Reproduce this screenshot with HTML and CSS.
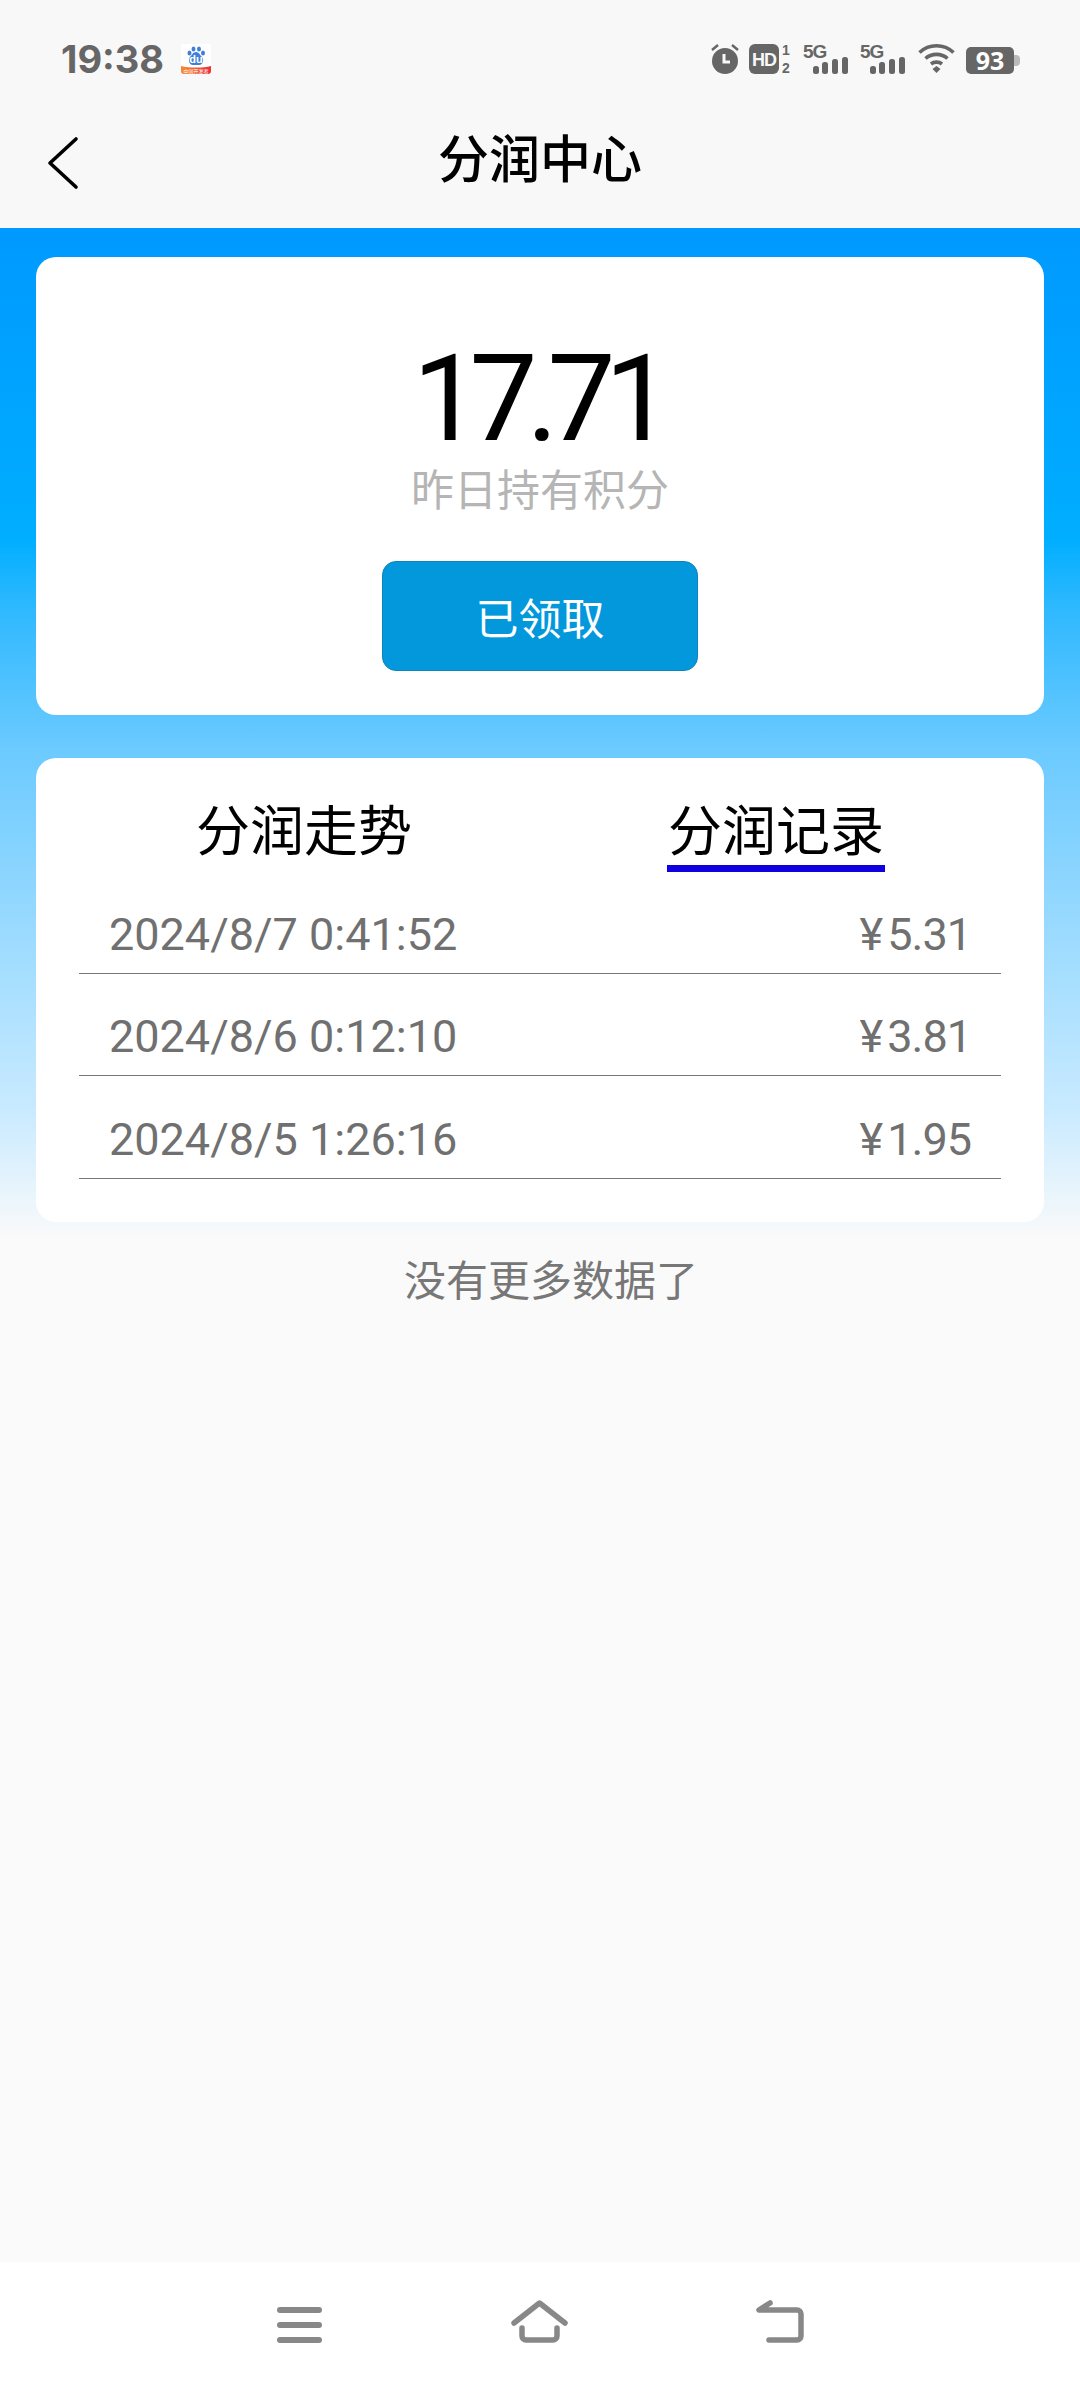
FILE: index.html
```html
<!DOCTYPE html>
<html lang="zh-CN">
<head>
  <meta charset="UTF-8">
  <meta name="viewport" content="width=device-width, initial-scale=1.0">
  <title>分润中心</title>
  <link rel="stylesheet" href="styles.css">
</head>
<body>
  <div class="top">
    <div class="status">
      <div class="status-left">
        <span class="clock">19:38</span>
        <svg class="baidu" width="30" height="30" viewBox="0 0 30 30">
          <defs>
            <linearGradient id="baiduBand" x1="0" x2="1" y1="0" y2="0">
              <stop offset="0" stop-color="#f58a2a"/>
              <stop offset="1" stop-color="#ee2f3c"/>
            </linearGradient>
          </defs>
          <rect width="30" height="30" rx="3" fill="#fff"/>
          <path d="M0 22c8 2 22 2 30 0v5a3 3 0 0 1-3 3H3a3 3 0 0 1-3-3z" fill="url(#baiduBand)"/>
          <g fill="#3f7fd8">
            <ellipse cx="8.500" cy="9" rx="2" ry="2.600"/>
            <ellipse cx="12.500" cy="5" rx="2" ry="2.600"/>
            <ellipse cx="18" cy="5" rx="2" ry="2.600"/>
            <ellipse cx="22" cy="9" rx="2" ry="2.600"/>
            <path d="M15 8c3 0 4 3 6 5 2 3 1 8-3 8h-6c-4 0-5-5-3-8 2-2 3-5 6-5z"/>
          </g>
          <text x="15" y="19" class="baidu-du">du</text>
          <text x="15" y="28.500" class="baidu-band">中国开发者</text>
        </svg>
      </div>
      <div class="status-right">
        <svg class="alarm" width="30" height="30" viewBox="0 0 30 30">
          <circle cx="15" cy="17" r="13" fill="#666"/>
          <path d="M2 6l6-5M28 6l-6-5" stroke="#666" stroke-width="2.500" fill="none"/>
          <path d="M14 10v8h6" stroke="#f8f8f8" stroke-width="3" fill="none"/>
        </svg>
        <svg class="hd" width="43" height="30" viewBox="0 0 43 30">
          <rect width="30" height="30" rx="6" fill="#666"/>
          <text x="15" y="21.500" class="hd-text">HD</text>
          <text x="37" y="11" class="sim-no">1</text>
          <text x="37" y="29" class="sim-no">2</text>
        </svg>
        <svg class="signal" width="45" height="30" viewBox="0 0 45 30">
          <text x="0" y="14" class="net">5G</text>
          <rect x="10" y="22" width="6" height="8" rx="2.500" fill="#666"/>
          <rect x="19" y="18" width="6" height="12" rx="2.500" fill="#666"/>
          <rect x="29" y="15" width="6" height="15" rx="2.500" fill="#666"/>
          <rect x="39" y="13" width="6" height="17" rx="2.500" fill="#666"/>
        </svg>
        <svg class="signal" width="45" height="30" viewBox="0 0 45 30">
          <text x="0" y="14" class="net">5G</text>
          <rect x="10" y="22" width="6" height="8" rx="2.500" fill="#666"/>
          <rect x="19" y="18" width="6" height="12" rx="2.500" fill="#666"/>
          <rect x="29" y="15" width="6" height="15" rx="2.500" fill="#666"/>
          <rect x="39" y="13" width="6" height="17" rx="2.500" fill="#666"/>
        </svg>
        <svg class="wifi" width="37" height="30" viewBox="0 0 37 30">
          <path d="M1.500 8.500C11 -0.500 26 -0.500 35.500 8.500M7.500 14.500C13.500 9 23.500 9 29.500 14.500M13 20C16 17.500 21 17.500 24 20" stroke="#666" stroke-width="3.600" fill="none"/>
          <path d="M14.500 25l4-3 4 3-4 4z" fill="#666"/>
        </svg>
        <svg class="battery" width="54" height="27" viewBox="0 0 54 27">
          <rect width="48" height="27" rx="5" fill="#666"/>
          <path d="M48 8h2a4 4 0 0 1 4 4v3a4 4 0 0 1-4 4h-2z" fill="#bbb"/>
          <text x="24" y="23" class="batt-text">93</text>
        </svg>
      </div>
    </div>
    <div class="titlebar">
      <svg class="back" width="36" height="56" viewBox="0 0 36 56">
        <path d="M29 4L3 28l26 24" stroke="#000" stroke-width="3.600" stroke-linecap="round" stroke-linejoin="round" fill="none"/>
      </svg>
      <h1 class="title">分润中心</h1>
    </div>
  </div>

  <main class="main">
    <section class="card points">
      <div class="amount">17.71</div>
      <div class="amount-label">昨日持有积分</div>
      <button class="claim">已领取</button>
    </section>

    <section class="card records">
      <div class="tabs">
        <span class="tab">分润走势</span>
        <span class="tab active">分润记录</span>
      </div>
      <div class="row"><span>2024/8/7 0:41:52</span><span class="money">¥ 5.31</span></div>
      <div class="row"><span>2024/8/6 0:12:10</span><span class="money">¥ 3.81</span></div>
      <div class="row"><span>2024/8/5 1:26:16</span><span class="money">¥ 1.95</span></div>
    </section>

    <p class="no-more">没有更多数据了</p>
  </main>

  <nav class="navbar">
    <svg class="nav-menu" width="45" height="36" viewBox="0 0 45 36">
      <path d="M3 3h39M3 18h39M3 33h39" stroke="#888" stroke-width="6" stroke-linecap="round"/>
    </svg>
    <svg width="57" height="43" viewBox="0 0 57 43">
      <path d="M3 23L28.500 3 54 23" stroke="#888" stroke-width="5.500" stroke-linecap="round" stroke-linejoin="round" fill="none"/>
      <path d="M11 28v8a4 4 0 0 0 4 4h27a4 4 0 0 0 4-4v-8" stroke="#888" stroke-width="5.500" stroke-linecap="round" fill="none"/>
    </svg>
    <svg width="48" height="43" viewBox="0 0 48 43">
      <path d="M14 3L3 10h38a4 4 0 0 1 4 4v22a4 4 0 0 1-4 4H13" stroke="#888" stroke-width="5.500" stroke-linecap="round" stroke-linejoin="round" fill="none"/>
    </svg>
  </nav>
</body>
</html>
```

FILE: styles.css
```css
* {
  box-sizing: border-box;
}
html, body {
  margin: 0;
  height: 100%;
}
body {
  width: 1080px;
  height: 2388px;
  display: flex;
  flex-direction: column;
  overflow: hidden;
  font-family: Roboto, "Noto Sans CJK SC", sans-serif;
  background: #fafafa;
  color: #000;
}
svg {
  overflow: visible;
}

/* status bar + title */
.top {
  height: 228px;
  background: #f8f8f8;
}
.status {
  height: 114px;
  padding: 44px 60px 0 61px;
  display: flex;
  justify-content: space-between;
  align-items: flex-start;
}
.status-left {
  display: flex;
  align-items: center;
  gap: 17px;
}
.clock {
  font-family: Inter, "Noto Sans", sans-serif;
  font-size: 38px;
  line-height: 28px;
  font-weight: 700;
  color: #666;
}
.baidu-du {
  font: 700 11px "Liberation Sans", sans-serif;
  fill: #fff;
  text-anchor: middle;
}
.baidu-band {
  font: 5px "Noto Sans CJK SC", sans-serif;
  fill: #fff;
  text-anchor: middle;
}
.status-right {
  display: flex;
  align-items: flex-start;
  gap: 9px;
}
.status-right .hd {
  margin-right: 2px;
}
.status-right .signal {
  margin-right: 3px;
}
.status-right .wifi {
  margin: 0 2px 0 1px;
}
.status-right .battery {
  margin-top: 3px;
}
.hd-text {
  font: 700 18px "Liberation Sans", sans-serif;
  letter-spacing: -1px;
  fill: #f8f8f8;
  text-anchor: middle;
}
.sim-no {
  font: 700 14px "Liberation Sans", sans-serif;
  fill: #666;
  text-anchor: middle;
}
.net {
  font: 700 19px "Liberation Sans", sans-serif;
  letter-spacing: -1px;
  fill: #666;
}
.batt-text {
  font: 700 25px "Noto Sans", sans-serif;
  fill: #fff;
  text-anchor: middle;
}
.titlebar {
  height: 114px;
  padding-left: 47px;
  display: flex;
  align-items: flex-start;
  position: relative;
}
.back {
  margin-top: 21px;
}
.title {
  position: absolute;
  left: 0;
  right: 0;
  top: 16px;
  margin: 0;
  text-align: center;
  font-size: 51px;
  line-height: 62px;
  font-weight: 500;
}

.main {
  flex: 1;
  padding: 29px 36px 0;
  background: linear-gradient(180deg, #0099ff 0, #00aeff 310px, #2cb8ff 375px, #6bcaff 520px, #c8eaff 880px, #fafafa 1010px);
}
.card {
  background: #fff;
  border-radius: 20px;
}
.points {
  height: 458px;
  padding-top: 74px;
  margin-bottom: 43px;
  display: flex;
  flex-direction: column;
  align-items: center;
}
.amount {
  font-size: 121px;
  line-height: 136px;
  letter-spacing: -11px;
  padding-right: 6px;
}
.amount-label {
  font-size: 43px;
  line-height: 48px;
  color: #b5b5b5;
}
.claim {
  width: 316px;
  height: 110px;
  margin-top: 46px;
  padding: 0;
  border: 1px solid #0a86bd;
  border-radius: 14px;
  background: #0398dc;
  color: #fff;
  font: 43px "Noto Sans CJK SC", sans-serif;
}

.records {
  height: 464px;
  padding: 38px 43px 0;
}
.tabs {
  display: flex;
  justify-content: center;
  gap: 254px;
  height: 75px;
}
.tab {
  width: 218px;
  height: 76px;
  font-size: 54px;
  line-height: 74px;
  text-align: center;
}
.tab.active {
  border-bottom: 7px solid #1000e0;
}
.row {
  height: 102.500px;
  padding: 25px 30px 0;
  display: flex;
  justify-content: space-between;
  align-items: center;
  border-bottom: 1px solid #777;
  font-size: 45px;
  color: #707070;
}
.money {
  letter-spacing: -1px;
  word-spacing: -5px;
}

.no-more {
  margin: 30px 0 0;
  padding-left: 22px;
  text-align: center;
  font-size: 42px;
  line-height: 60px;
  color: #777;
}

.navbar {
  height: 126px;
  background: #fff;
  display: flex;
  align-items: flex-start;
  padding: 38px 276px 0 277px;
  justify-content: space-between;
}
.nav-menu {
  margin-top: 7px;
}
```
